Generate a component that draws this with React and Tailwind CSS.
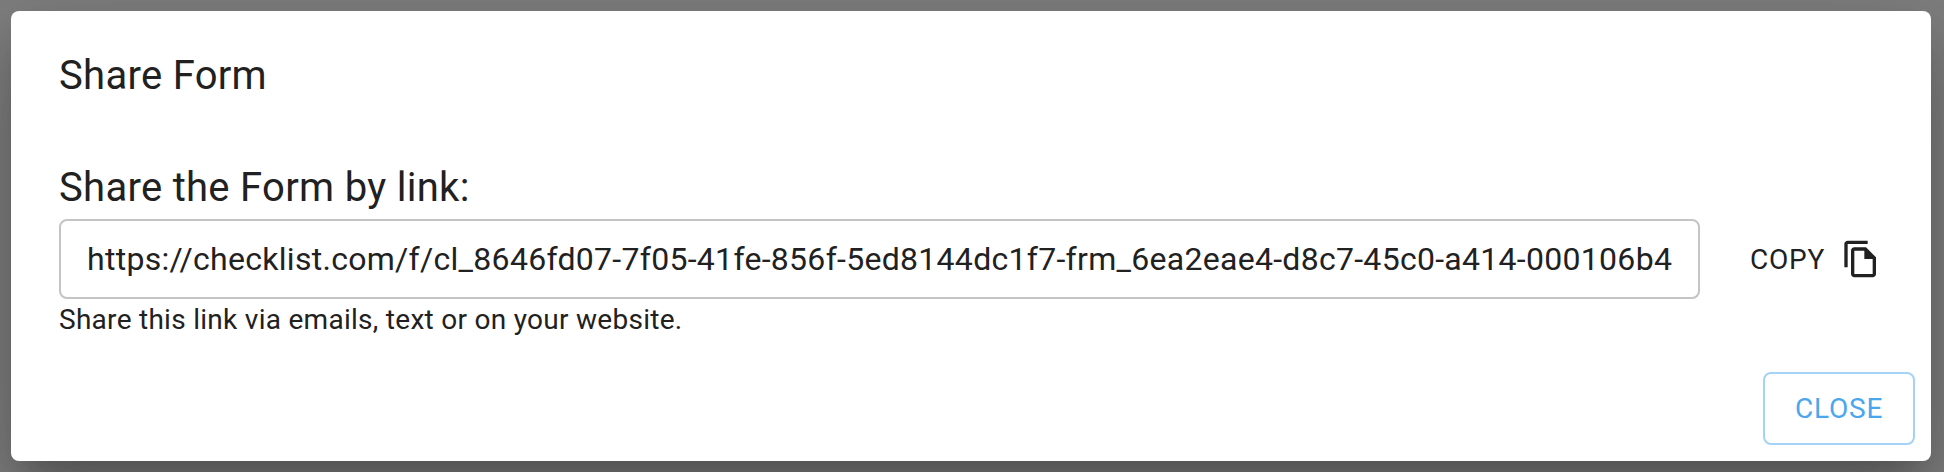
export default function App() {
  return (
    <div className="h-[472px] w-[1944px] overflow-hidden bg-[#7f7f7f] pt-[11px] pl-[11px] font-['Roboto',sans-serif] text-[#212121]">
      <div className="flex h-[450px] w-[1920px] flex-col rounded-lg bg-white shadow-[0_22px_30px_-14px_rgba(0,0,0,0.2),0_48px_76px_6px_rgba(0,0,0,0.14),0_18px_92px_16px_rgba(0,0,0,0.12)]">
        <h1 className="ml-12 pt-[33px] text-[40px] leading-[64px] tracking-[0.3px]">Share Form</h1>
        <h2 className="mt-12 ml-12 h-[63px] text-[40px] leading-[64px] tracking-[0.3px]">Share the Form by link:</h2>
        <div className="flex items-center pl-12">
          <div className="flex h-20 w-[1641px] shrink-0 items-center rounded-lg border-2 border-[#c4c4c4] pl-[26px] text-[32px] tracking-[0.288px] whitespace-nowrap">
            https://checklist.com/f/cl_8646fd07-7f05-41fe-856f-5ed8144dc1f7-frm_6ea2eae4-d8c7-45c0-a414-000106b4
          </div>
          <button className="ml-[50px] flex items-center gap-4 text-[28px] tracking-[0.8px]">
            <span className="pt-0.5">COPY</span>
            <svg className="size-10" viewBox="0 0 24 24" fill="currentColor"><path d="M16 1H4c-1.1 0-2 .9-2 2v14h2V3h12V1zm-1 4H8c-1.1 0-1.99.9-1.99 2L6 21c0 1.1.89 2 1.99 2H19c1.1 0 2-.9 2-2V11l-6-6zM8 21V7h6v5h5v9H8z" /></svg>
          </button>
        </div>
        <p className="ml-12 pt-px text-[28px] leading-[40px] tracking-[0.28px]">Share this link via emails, text or on your website.</p>
        <div className="mt-auto flex justify-end pr-4 pb-4">
          <button className="h-[73px] w-[152px] rounded-lg border-2 border-[#a4d3f7] text-[28px] tracking-[0.8px] text-[#4aa7ee]">CLOSE</button>
        </div>
      </div>
    </div>
  );
}
